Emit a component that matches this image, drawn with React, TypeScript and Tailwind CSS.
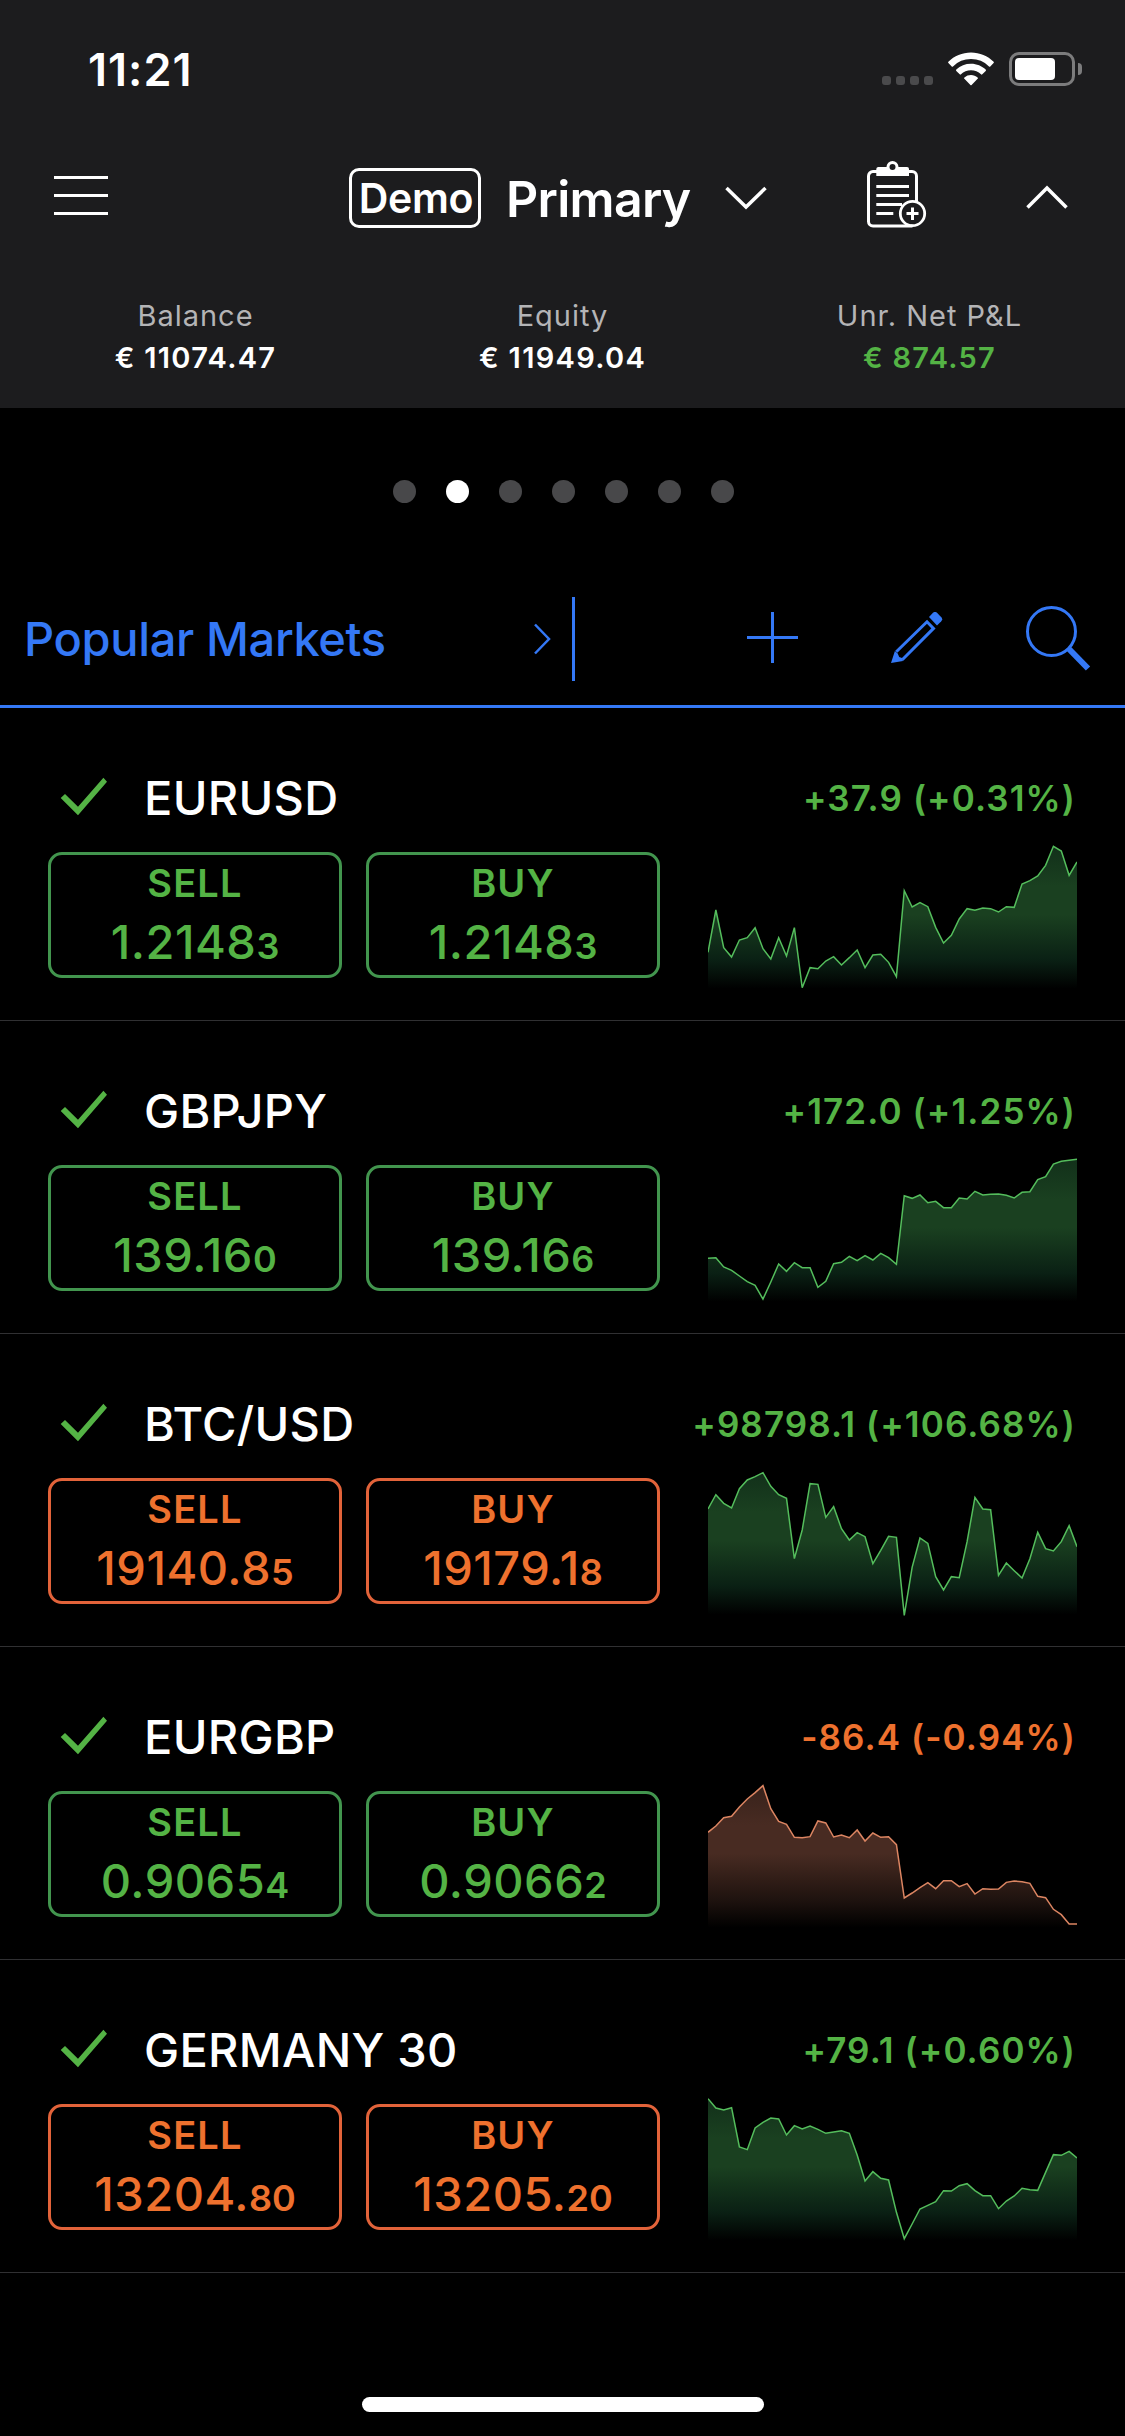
import { useId } from "react";
import clsx from "clsx";

type Tone = "up" | "down";

interface Price {
  main: string;
  pip: string;
}

interface Market {
  name: string;
  change: string;
  trend: Tone;
  tick: Tone;
  sell: Price;
  buy: Price;
  points: number[];
}

const MARKETS: Market[] = [
  {
    name: "EURUSD",
    change: "+37.9 (+0.31%)",
    trend: "up",
    tick: "up",
    sell: { main: "1.2148", pip: "3" },
    buy: { main: "1.2148", pip: "3" },
    points: [
      337, 210, 323, 351, 300, 293, 263, 326, 357, 293, 348, 263, 443, 383, 386, 363, 350, 375, 353, 330, 383, 345, 343, 367,
      410, 152, 201, 188, 200, 262, 309, 286, 237, 206, 211, 204, 206, 216, 200, 202, 132, 122, 108, 76, 19, 33, 106, 66,
    ],
  },
  {
    name: "GBPJPY",
    change: "+172.0 (+1.25%)",
    trend: "up",
    tick: "up",
    sell: { main: "139.16", pip: "0" },
    buy: { main: "139.16", pip: "6" },
    points: [
      316, 314, 342, 352, 369, 386, 397, 438, 387, 333, 355, 329, 344, 344, 403, 385, 332, 328, 310, 323, 308, 321, 301, 314,
      334, 128, 136, 126, 149, 145, 164, 164, 135, 138, 115, 126, 124, 123, 127, 135, 118, 116, 80, 71, 33, 25, 22, 19,
    ],
  },
  {
    name: "BTC/USD",
    change: "+98798.1 (+106.68%)",
    trend: "up",
    tick: "down",
    sell: { main: "19140.8", pip: "5" },
    buy: { main: "19179.1", pip: "8" },
    points: [
      129, 86, 112, 126, 68, 42, 32, 20, 61, 86, 97, 278, 192, 53, 55, 154, 122, 188, 222, 200, 212, 293, 253, 211,
      214, 448, 304, 216, 232, 332, 372, 332, 335, 227, 94, 129, 131, 328, 291, 314, 336, 278, 199, 248, 255, 227, 179, 242,
    ],
  },
  {
    name: "EURGBP",
    change: "-86.4 (-0.94%)",
    trend: "down",
    tick: "up",
    sell: { main: "0.9065", pip: "4" },
    buy: { main: "0.9066", pip: "2" },
    points: [
      160, 141, 116, 112, 84, 60, 41, 20, 89, 127, 136, 175, 176, 173, 126, 132, 174, 168, 176, 153, 186, 162, 175, 173,
      197, 357, 342, 326, 311, 329, 305, 305, 323, 314, 345, 329, 331, 330, 310, 306, 308, 313, 352, 356, 391, 407, 435, 435,
    ],
  },
  {
    name: "GERMANY 30",
    change: "+79.1 (+0.60%)",
    trend: "up",
    tick: "down",
    sell: { main: "13204.", pip: "80" },
    buy: { main: "13205.", pip: "20" },
    points: [
      20, 48, 54, 47, 165, 173, 108, 91, 78, 81, 129, 101, 111, 102, 112, 124, 120, 116, 124, 189, 267, 239, 259, 264,
      361, 440, 396, 351, 340, 329, 296, 297, 281, 275, 296, 311, 311, 350, 327, 312, 289, 293, 295, 241, 188, 190, 178, 198,
    ],
  },
];

const CHART_W = 1107;
const CHART_H = 450;

const CHART_COLORS = {
  up: { line: "#54bd5c", top: "#12301a", mid: "#1a4020", low: "#0a2014" },
  down: { line: "#dc8562", top: "#38221b", mid: "#482b22", low: "#1f130f" },
};

function Sparkline({ points, tone }: { points: number[]; tone: Tone }) {
  const id = useId();
  const c = CHART_COLORS[tone];
  const step = CHART_W / (points.length - 1);
  const line = points.map((y, i) => `${(i * step).toFixed(1)},${y}`).join(" ");

  return (
    <svg width="369" height="150" viewBox={`0 0 ${CHART_W} ${CHART_H}`} className="block shrink-0">
      <defs>
        <linearGradient id={id} gradientUnits="userSpaceOnUse" x1="0" y1="19" x2="0" y2="446">
          <stop offset="0" stopColor={c.top} />
          <stop offset="0.28" stopColor={c.mid} />
          <stop offset="0.48" stopColor={c.mid} />
          <stop offset="0.8" stopColor={c.low} />
          <stop offset="1" stopColor="#000" />
        </linearGradient>
      </defs>
      <polygon points={`0,446 ${line} ${CHART_W},446`} fill={`url(#${id})`} />
      <polyline points={line} fill="none" stroke={c.line} strokeWidth="4.500" />
    </svg>
  );
}

function StatusBar() {
  return (
    <div className="h-[138px] flex items-center pl-[88px] pr-[43px]">
      <span className="text-[45px] leading-none font-semibold tracking-[1px]">11:21</span>
      <div className="ml-auto flex items-center">
        <div className="flex gap-[5px] mt-[23px]">
          {[0, 1, 2, 3].map((i) => (
            <div key={i} className="w-[9px] h-[9px] rounded-[3px] bg-[#4a4a4c]" />
          ))}
        </div>
        <svg width="46" height="34" viewBox="0 0 46 34" className="ml-[15px]" fill="#fff">
          <path d="M23 .5C31.800.5 39.800 4 45.600 9.700a.9.9 0 0 1 0 1.300l-3.300 3.400a.9.9 0 0 1-1.300 0A25.700 25.700 0 0 0 23 7.100 25.700 25.700 0 0 0 5 14.400a.9.9 0 0 1-1.300 0L.400 11a.9.9 0 0 1 0-1.300C6.200 4 14.200.5 23 .5Z" />
          <path d="M23 11.700c5.700 0 10.900 2.300 14.700 5.900a.9.9 0 0 1 0 1.300l-3.400 3.400a.9.9 0 0 1-1.300 0A14.500 14.500 0 0 0 23 18.300c-3.900 0-7.400 1.500-10 4a.9.9 0 0 1-1.300 0l-3.400-3.400a.9.9 0 0 1 0-1.300A21.200 21.200 0 0 1 23 11.700Z" />
          <path d="M23 23c2.500 0 4.800.9 6.600 2.400a.9.9 0 0 1 0 1.400l-6 6.100a.9.9 0 0 1-1.200 0l-6-6.100a.9.9 0 0 1 0-1.400A10.300 10.300 0 0 1 23 23Z" />
        </svg>
        <div className="ml-[15px] w-[66px] h-[34px] rounded-[10px] border-3 border-[#7c7c7d] p-[3px]">
          <div className="w-[40px] h-[22px] rounded-[4px] bg-white" />
        </div>
        <div className="ml-[3px] w-[4px] h-[12px] rounded-r-full bg-[#7c7c7d]" />
      </div>
    </div>
  );
}

function ClipboardIcon() {
  return (
    <svg width="60" height="68" viewBox="0 0 60 68" fill="none" stroke="#fff" strokeWidth="3">
      <path d="M10 10.500H6a4.500 4.500 0 0 0-4.500 4.500v45.500a4.500 4.500 0 0 0 4.500 4.500h39.500M42 10.500h3a4.500 4.500 0 0 1 4.500 4.500v25" />
      <path d="M11 6h8.500a6 6 0 0 1 12 0H40a2 2 0 0 1 2 2v7H9.300V8A2 2 0 0 1 11 6Z" fill="#fff" stroke="none" />
      <circle cx="25.500" cy="6" r="3" fill="#1c1c1e" stroke="none" />
      <path d="M9.300 25.500H42M9.300 34.500H42M9.300 43.500H35M9.300 52.500h17" />
      <circle cx="45.500" cy="52.500" r="12.200" strokeWidth="2.800" />
      <path d="M39.500 52.500h12M45.500 46.500v12.500" />
    </svg>
  );
}

function NavBar() {
  return (
    <div className="h-[120px] flex items-center pl-[54px]">
      <div className="w-[54px] flex flex-col gap-[15px] mb-[5px]">
        <div className="h-[3px] bg-white" />
        <div className="h-[3px] bg-white" />
        <div className="h-[3px] bg-white" />
      </div>
      <div className="ml-[241px] w-[132px] h-[60px] border-3 border-white rounded-[10px] flex items-center justify-center pl-[2px]">
        <span className="text-[41px] leading-none font-semibold tracking-[-0.3px]">Demo</span>
      </div>
      <div className="ml-[25px] w-[219px] text-[50px] leading-none font-semibold tracking-[-0.7px] mt-[2px]">Primary</div>
      <svg width="42" height="24" viewBox="0 0 42 24" fill="none" stroke="#fff" strokeWidth="3.500">
        <path d="M1.500 2 21 21 40.500 2" />
      </svg>
      <div className="ml-[100px] mb-[7px]">
        <ClipboardIcon />
      </div>
      <svg width="42" height="24" viewBox="0 0 42 24" fill="none" stroke="#fff" strokeWidth="3.500" className="ml-[99px] mb-[2px]">
        <path d="M1.500 22.500 21 3l19.500 19.500" />
      </svg>
    </div>
  );
}

function Stat({ label, value, positive }: { label: string; value: string; positive?: boolean }) {
  return (
    <div className="text-center">
      <div className="h-[42px] leading-[42px] text-[29px] tracking-[1px] text-[#b4b4b6]">{label}</div>
      <div className={clsx("h-[42px] leading-[42px] text-[29px] tracking-[1.3px] font-semibold", positive && "text-[#54b345]")}>
        {value}
      </div>
    </div>
  );
}

function PageDots() {
  return (
    <div className="h-[165px] pt-[72px] pl-[2px] flex justify-center gap-[30px]">
      {[0, 1, 2, 3, 4, 5, 6].map((i) => (
        <div key={i} className={clsx("w-[23px] h-[23px] rounded-full", i === 1 ? "bg-white" : "bg-[#48484a]")} />
      ))}
    </div>
  );
}

function Toolbar() {
  return (
    <div className="h-[135px] flex items-center pl-6 border-b-3 border-[#3478f6] text-[#3478f6]">
      <div className="w-[509px] mb-[2px] text-[47px] leading-none font-medium tracking-[-0.35px] whitespace-nowrap">
        Popular Markets
      </div>
      <svg width="18" height="32" viewBox="0 0 18 32" fill="none" stroke="currentColor" strokeWidth="2.500">
        <path d="M2 1.500 16 16 2 30.500" />
      </svg>
      <div className="ml-[21px] w-[3px] h-[84px] bg-[#3478f6]" />
      <svg width="51" height="51" viewBox="0 0 51 51" className="ml-[172px] mb-[3px]" stroke="currentColor" strokeWidth="3">
        <path d="M25.500 0v51M0 25.500h51" />
      </svg>
      <svg width="52" height="51" viewBox="0 0 52 51" className="ml-[93px] mb-[3px]" fill="none" stroke="currentColor" strokeWidth="3">
        <path d="M5.300 39.700 36 9.800l6.500 6.600L11.300 47.700" />
        <path d="M0 51 3.900 39l2.800 2.500 1.500 3.500L11 46l1 3Z" fill="currentColor" stroke="none" />
        <path d="m38 5 4-4.200a3 3 0 0 1 4 0l4.300 4.400a3 3 0 0 1 0 4L46 13.500Z" fill="currentColor" stroke="none" />
      </svg>
      <svg width="65" height="65" viewBox="0 0 65 65" className="ml-[83px] mb-[2px]" fill="none" stroke="currentColor">
        <circle cx="25.500" cy="25.500" r="24" strokeWidth="3" />
        <path d="m42.500 42.500 19.500 20" strokeWidth="6" />
      </svg>
    </div>
  );
}

function QuoteButton({ label, price, tone }: { label: string; price: Price; tone: Tone }) {
  return (
    <button
      className={clsx(
        "w-[294px] h-[126px] rounded-[14px] border-3 flex flex-col items-center pt-2 gap-[15px]",
        tone === "up" ? "border-[#42954e] text-[#54b345]" : "border-[#e2633a] text-[#ee712e]"
      )}
    >
      <span className="h-10 leading-10 text-[38px] font-semibold tracking-[1.2px]">{label}</span>
      <span className="h-12 flex items-baseline leading-[48px] text-[47px] font-medium tracking-[0.5px]">
        {price.main}
        <span className="text-[36px] leading-none font-semibold tracking-normal">{price.pip}</span>
      </span>
    </button>
  );
}

function MarketRow({ market }: { market: Market }) {
  return (
    <div className="h-[313px] pt-[66px] pl-12 flex gap-12 border-b border-[#303032]">
      <div className="w-[612px]">
        <div className="h-12 pl-3 flex items-center">
          <svg width="48" height="42" viewBox="0 0 48 42" className="text-[#54b345]">
            <path d="M.7 21 5 17l13 12.700L43.400.7 47 4.700 18 38.300Z" fill="currentColor" />
          </svg>
          <span className="ml-9 mb-[2px] text-[47px] leading-none font-medium tracking-[0.3px] whitespace-nowrap">
            {market.name}
          </span>
        </div>
        <div className="mt-[30px] flex gap-6">
          <QuoteButton label="SELL" price={market.sell} tone={market.tick} />
          <QuoteButton label="BUY" price={market.buy} tone={market.tick} />
        </div>
      </div>
      <div className="w-[369px] flex flex-col items-end">
        <div
          className={clsx(
            "h-12 leading-[48px] mb-[18px] pr-px text-[35px] font-semibold tracking-[1.1px] whitespace-nowrap",
            market.trend === "up" ? "text-[#54b345]" : "text-[#ee712e]"
          )}
        >
          {market.change}
        </div>
        <Sparkline points={market.points} tone={market.trend} />
      </div>
    </div>
  );
}

export default function App() {
  return (
    <div className="w-[1125px] h-[2436px] bg-black text-white font-['Inter',sans-serif] flex flex-col overflow-hidden">
      <header className="h-[408px] shrink-0 bg-[#1c1c1e]">
        <StatusBar />
        <NavBar />
        <div className="pt-[37px] px-3 grid grid-cols-3">
          <Stat label="Balance" value="€ 11074.47" />
          <Stat label="Equity" value="€ 11949.04" />
          <Stat label="Unr. Net P&L" value="€ 874.57" positive />
        </div>
      </header>
      <PageDots />
      <Toolbar />
      <main>
        {MARKETS.map((m) => (
          <MarketRow key={m.name} market={m} />
        ))}
      </main>
      <div className="mt-auto mb-6 mx-auto w-[402px] h-[15px] rounded-full bg-white" />
    </div>
  );
}
